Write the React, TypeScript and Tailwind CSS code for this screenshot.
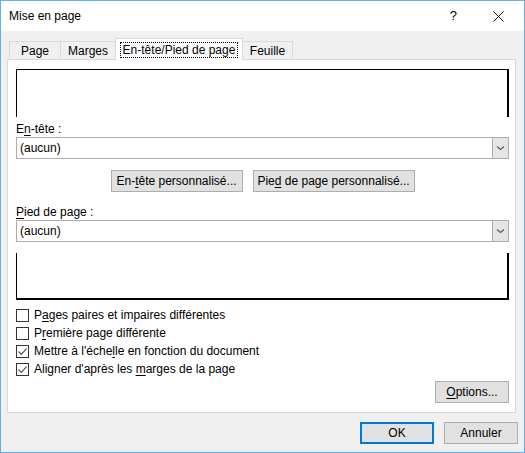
import React from "react";

const font = { fontFamily: '"Liberation Sans", Arial, sans-serif' };

function Check({ checked, children }: { checked: boolean; children: React.ReactNode }) {
  return (
    <div className="h-[18px] flex items-center">
      <div className="w-[13px] h-[13px] border border-[#333333] bg-white flex items-center justify-center">
        {checked && (
          <svg width="11" height="11" viewBox="0 0 11 11">
            <path d="M1.5 5.5 L4.3 8.3 L9.6 2.6" fill="none" stroke="#555" strokeWidth="1.2" />
          </svg>
        )}
      </div>
      <span className="ml-[5px] text-[12px] text-black leading-none">{children}</span>
    </div>
  );
}

function Select() {
  return (
    <div className="h-[22px] border border-[#adadad] bg-white flex items-stretch">
      <div className="flex-1 flex items-center pl-[3px] text-[12px] text-black">(aucun)</div>
      <div className="w-[16px] bg-[#e5e5e5] border-l border-[#adadad] flex items-center justify-center">
        <svg width="9" height="6" viewBox="0 0 9 6">
          <path d="M1 1.5 L4.5 4.5 L8 1.5" fill="none" stroke="#555" strokeWidth="1.1" />
        </svg>
      </div>
    </div>
  );
}

function Btn({ children, w, primary }: { children: React.ReactNode; w: string; primary?: boolean }) {
  return (
    <div
      className={
        "h-[22px] flex items-center justify-center text-[12px] text-black bg-[#e1e1e1] " +
        (primary ? "border-2 border-[#0078d7] " : "border border-[#adadad] ") +
        w
      }
    >
      {children}
    </div>
  );
}

export default function App() {
  return (
    <div className="w-[525px] h-[453px] border border-[#63b1ec] bg-[#f0f0f0] flex flex-col select-none" style={font}>
      <div className="h-[30px] bg-white flex items-center shrink-0">
        <span className="ml-[8px] text-[12px] text-black">Mise en page</span>
        <span className="ml-auto text-[13px] text-black mr-[36px]">?</span>
        <svg width="11" height="11" viewBox="0 0 11 11" className="mr-[20px]">
          <path d="M0.5 0.5 L10.5 10.5 M10.5 0.5 L0.5 10.5" stroke="#111" strokeWidth="1" />
        </svg>
      </div>
      <div className="pl-[6px] pr-[8px] pt-[7px]">
        <div className="flex items-end pl-[2px] h-[21px] relative z-10">
          <div className="w-[51px] h-[18px] border-t border-l border-[#d9d9d9] bg-[#f0f0f0] flex items-center justify-center text-[12px] text-black">Page</div>
          <div className="w-[55px] h-[18px] border-t border-l border-[#d9d9d9] bg-[#f0f0f0] flex items-center justify-center text-[12px] text-black">Marges</div>
          <div className="w-[128px] h-[22px] -mb-px border-t border-l border-r border-[#d9d9d9] bg-white flex items-center justify-center text-[12px] text-black">
            <span className="border border-dotted border-black px-[2px] leading-[14px]">En-tête/Pied de page</span>
          </div>
          <div className="w-[50px] h-[18px] border-t border-r border-[#d9d9d9] bg-[#f0f0f0] flex items-center justify-center text-[12px] text-black">Feuille</div>
        </div>
        <div className="bg-white border border-[#d9d9d9] pl-[8px] pr-[6px] pt-[9px] pb-[9px] flex flex-col">
          <div className="h-[48px] border-t border-l border-r-2 border-black" />
          <div className="mt-[3px] h-[17px] flex items-center text-[12px] text-black">
            <span>E<u className="underline-offset-2">n</u>-tête :</span>
          </div>
          <Select />
          <div className="mt-[11px] flex justify-center gap-[10px]">
            <Btn w="w-[132px]"><span>En-<u className="underline-offset-2">t</u>ête personnalisé...</span></Btn>
            <Btn w="w-[162px]"><span>Pie<u className="underline-offset-2">d</u> de page personnalisé...</span></Btn>
          </div>
          <div className="mt-[11px] h-[17px] flex items-center text-[12px] text-black">
            <span><u className="underline-offset-2">P</u>ied de page :</span>
          </div>
          <Select />
          <div className="mt-[11px] h-[47px] border-l border-r-2 border-b-2 border-black" />
          <div className="mt-[6px] flex flex-col">
            <Check checked={false}>P<u className="underline-offset-2">a</u>ges paires et impaires différentes</Check>
            <Check checked={false}>P<u className="underline-offset-2">r</u>emière page différente</Check>
            <Check checked={true}>Mettre à l'éche<u className="underline-offset-2">l</u>le en fonction du document</Check>
            <Check checked={true}>Aligner d'après les <u className="underline-offset-2">m</u>arges de la page</Check>
          </div>
          <div className="mt-[3px] flex justify-end">
            <Btn w="w-[74px]"><span><u className="underline-offset-2">O</u>ptions...</span></Btn>
          </div>
        </div>
      </div>
      <div className="mt-[9px] flex justify-end gap-[10px] pr-[6px]">
        <Btn w="w-[74px]" primary>OK</Btn>
        <Btn w="w-[74px]">Annuler</Btn>
      </div>
    </div>
  );
}
